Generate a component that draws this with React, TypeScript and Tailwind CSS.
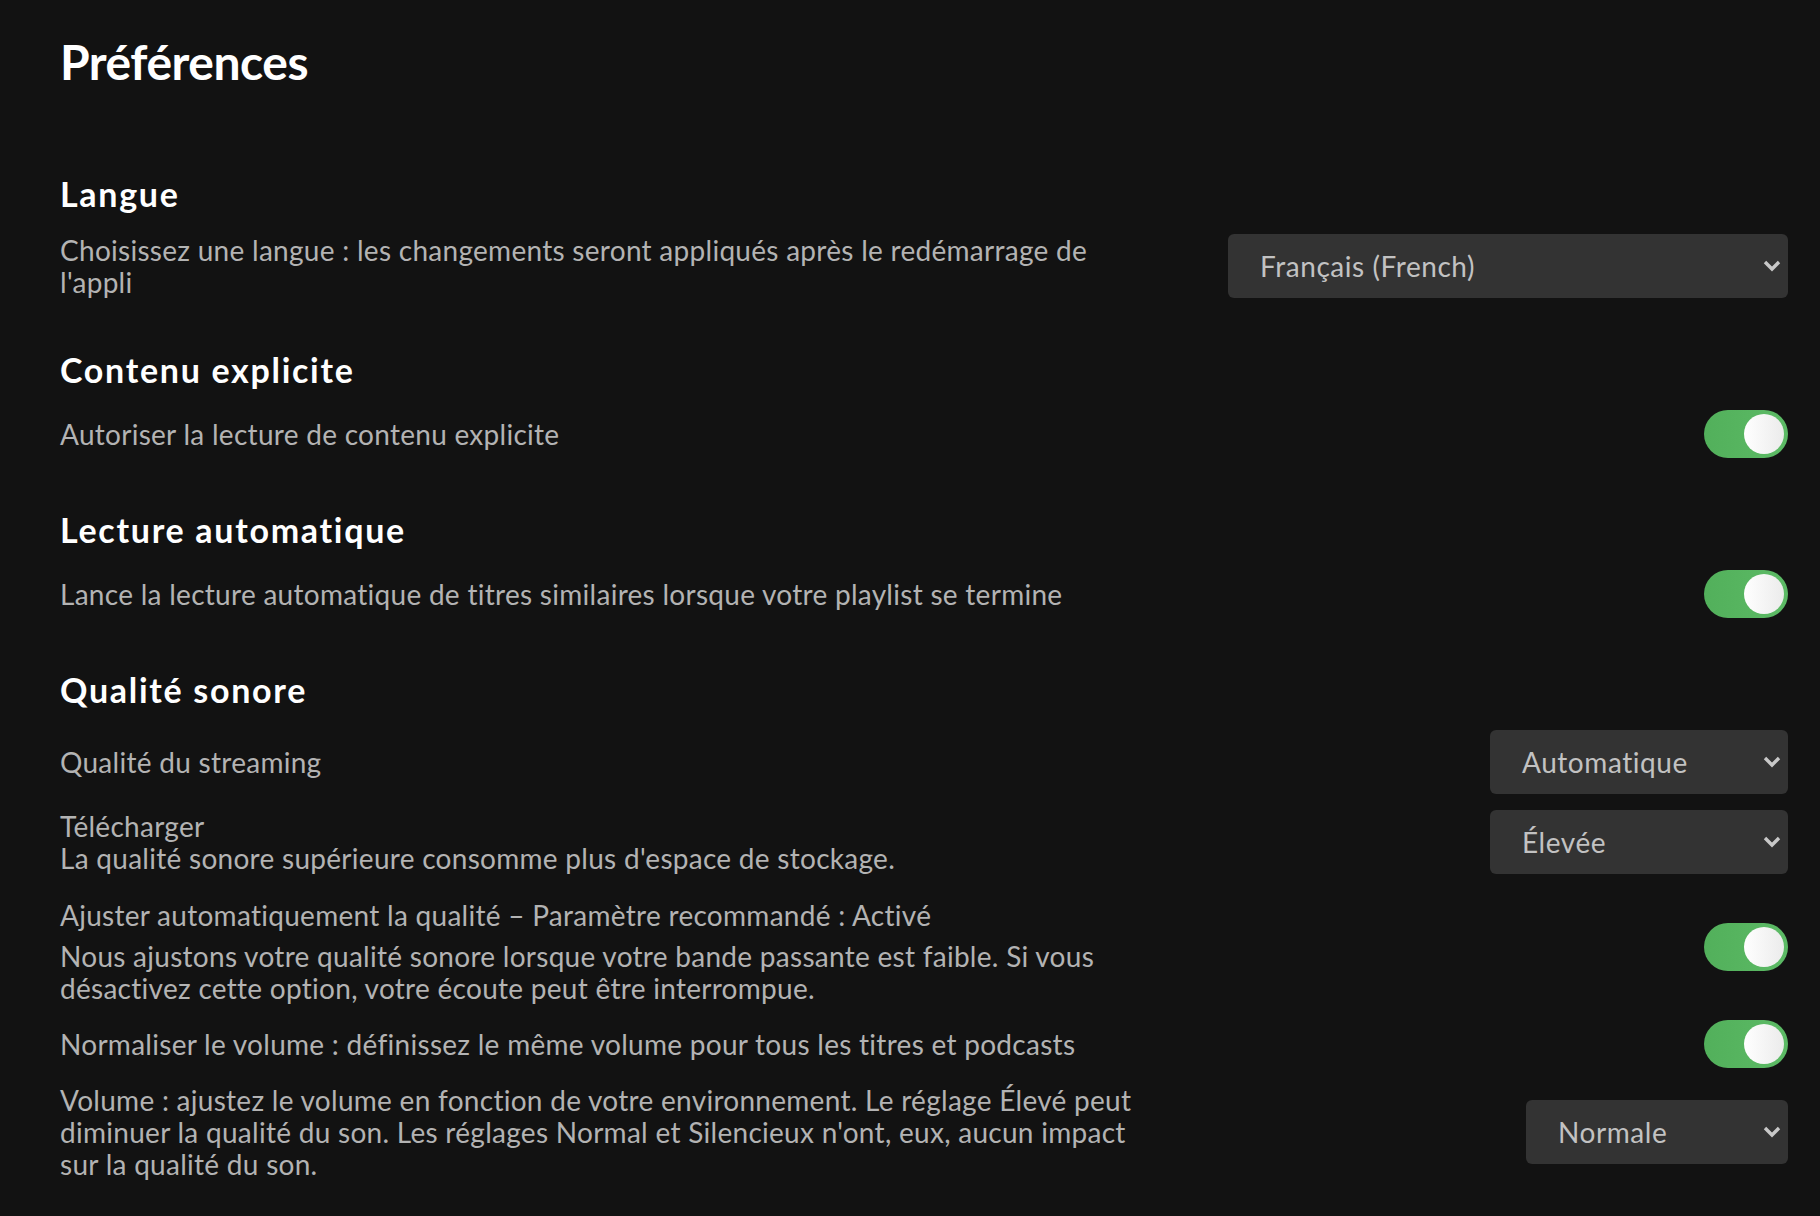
import React from "react";

const Toggle: React.FC<{ className?: string }> = ({ className = "" }) => (
  <div className={`relative h-[48px] w-[84px] shrink-0 rounded-full bg-linear-to-r from-[#52b05b] to-[#5cba65] ${className}`}>
    <div className="absolute right-[4px] top-[4px] h-[40px] w-[40px] rounded-full bg-linear-to-r from-white to-[#ebebeb]" />
  </div>
);

const Select: React.FC<{ value: string; className: string }> = ({ value, className }) => (
  <div
    className={`flex h-[64px] shrink-0 items-center justify-between rounded-[6px] bg-[#333333] pl-[32px] pr-[7px] text-[28px] tracking-[0.02em] text-[#c2c2c2] ${className}`}
  >
    <span>{value}</span>
    <svg width="18" height="12" viewBox="0 0 18 12" fill="none">
      <polyline points="2,2 9,9 16,2" stroke="#c8c8c8" strokeWidth="3.4" />
    </svg>
  </div>
);

const Heading: React.FC<{ children: React.ReactNode }> = ({ children }) => (
  <h2 className="mb-5 text-[34px] font-bold leading-[40px] tracking-[0.05em] text-white">{children}</h2>
);

const Desc: React.FC<{ children: React.ReactNode }> = ({ children }) => (
  <p className="text-[28px] leading-[32px] tracking-[0.01em] text-[#b3b3b3]">{children}</p>
);

export default function App() {
  return (
    <div className="min-h-screen bg-[#121212] pl-[60px] pr-[32px] pt-[34px] font-['Lato','Liberation_Sans',sans-serif]">
      <h1 className="text-[48px] font-bold leading-[56px] tracking-[-0.01em] text-white">Préférences</h1>

      <div className="mt-[84px] flex flex-col gap-[52px]">
        <section>
          <Heading>Langue</Heading>
          <div className="flex items-center justify-between">
            <Desc>
              Choisissez une langue : les changements seront appliqués après le redémarrage de
              <br />
              l'appli
            </Desc>
            <Select value="Français (French)" className="w-[560px]" />
          </div>
        </section>

        <section>
          <Heading>Contenu explicite</Heading>
          <div className="flex items-center justify-between">
            <Desc>Autoriser la lecture de contenu explicite</Desc>
            <Toggle />
          </div>
        </section>

        <section>
          <Heading>Lecture automatique</Heading>
          <div className="flex items-center justify-between">
            <Desc>Lance la lecture automatique de titres similaires lorsque votre playlist se termine</Desc>
            <Toggle />
          </div>
        </section>

        <section>
          <Heading>Qualité sonore</Heading>
          <div className="flex items-center justify-between">
            <Desc>Qualité du streaming</Desc>
            <Select value="Automatique" className="w-[298px]" />
          </div>

          <div className="mt-4 flex items-center justify-between">
            <Desc>
              Télécharger
              <br />
              La qualité sonore supérieure consomme plus d'espace de stockage.
            </Desc>
            <Select value="Élevée" className="w-[298px]" />
          </div>

          <div className="mt-[25px] flex items-start justify-between">
            <div>
              <Desc>Ajuster automatiquement la qualité – Paramètre recommandé : Activé</Desc>
              <div className="mt-[9px]">
                <Desc>
                  Nous ajustons votre qualité sonore lorsque votre bande passante est faible. Si vous
                  <br />
                  désactivez cette option, votre écoute peut être interrompue.
                </Desc>
              </div>
            </div>
            <Toggle className="mt-[24px]" />
          </div>

          <div className="mt-4 flex items-center justify-between">
            <Desc>Normaliser le volume : définissez le même volume pour tous les titres et podcasts</Desc>
            <Toggle />
          </div>

          <div className="mt-4 flex items-center justify-between">
            <Desc>
              Volume : ajustez le volume en fonction de votre environnement. Le réglage Élevé peut
              <br />
              diminuer la qualité du son. Les réglages Normal et Silencieux n'ont, eux, aucun impact
              <br />
              sur la qualité du son.
            </Desc>
            <Select value="Normale" className="w-[262px]" />
          </div>
        </section>
      </div>
    </div>
  );
}
